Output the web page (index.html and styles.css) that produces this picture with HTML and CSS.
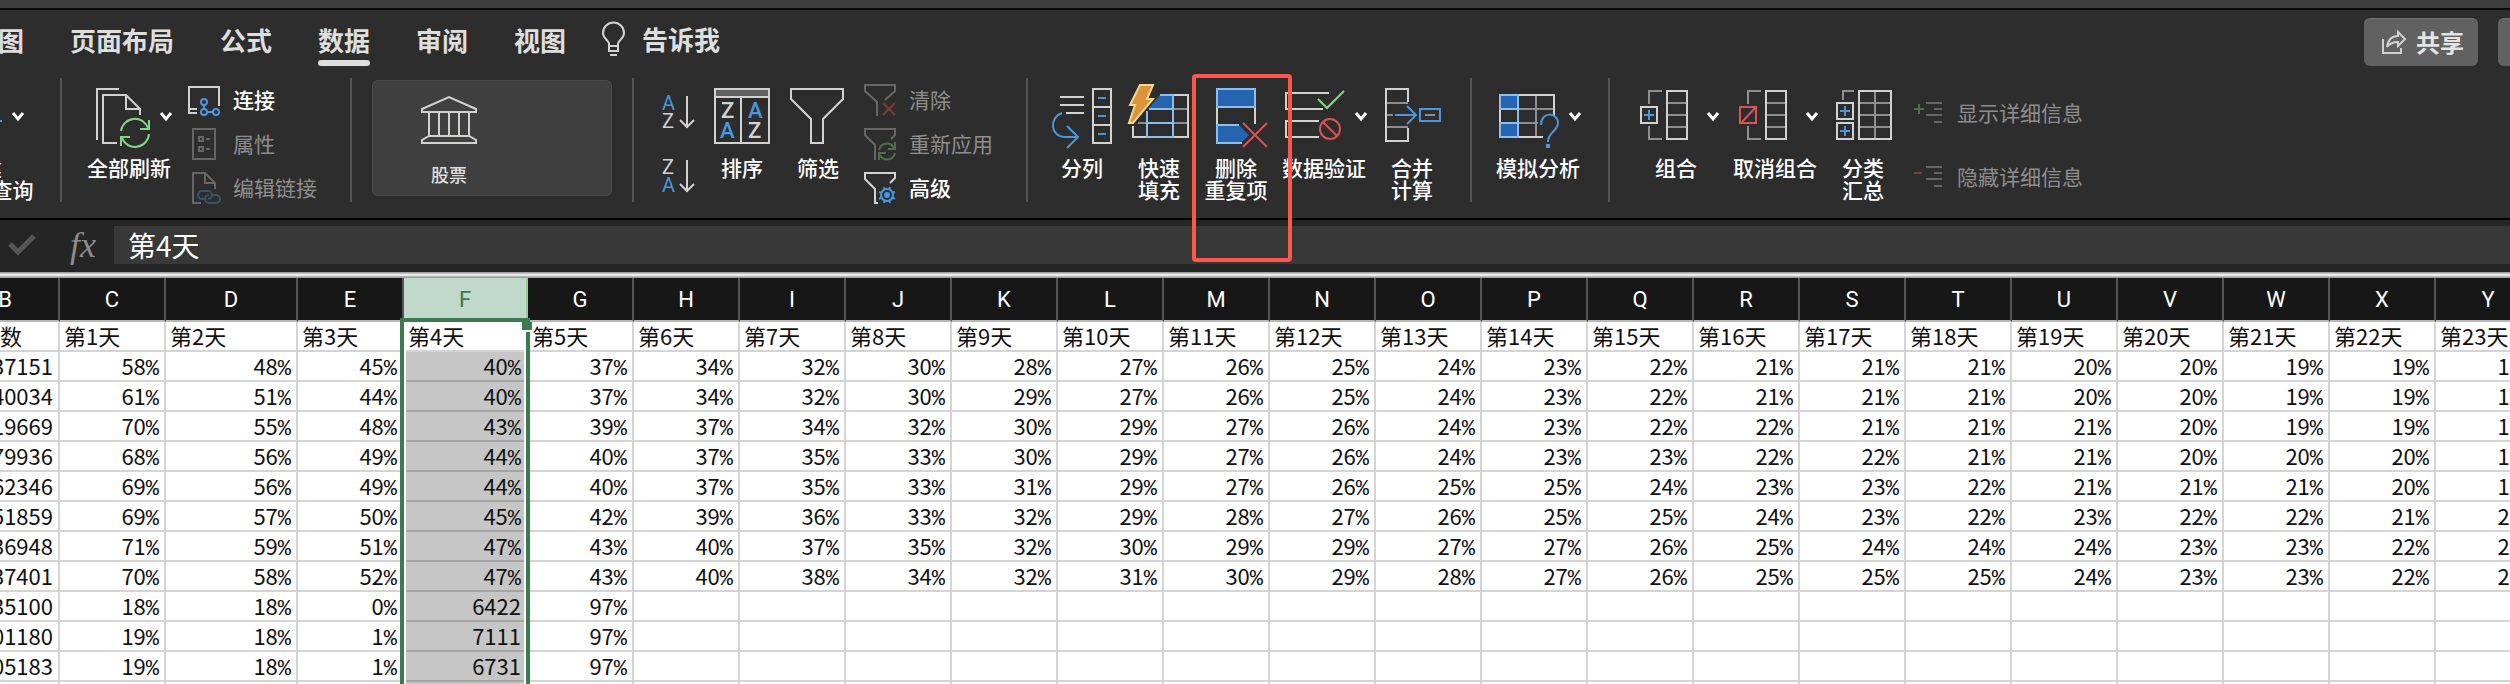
FILE: index.html
```html
<!DOCTYPE html>
<html lang="zh-CN">
<head>
<meta charset="utf-8">
<title>数据</title>
<link rel="stylesheet" href="styles.css">
</head>
<body>
<div class="titlebar"></div>
<header class="ribbon">
  <div class="topline">
    <nav class="tabs">
      <a class="tab" href="#draw">图</a>
      <a class="tab" href="#layout">页面布局</a>
      <a class="tab" href="#formula">公式</a>
      <a class="tab tab-active" href="#data" aria-current="page">数据</a>
      <a class="tab" href="#review">审阅</a>
      <a class="tab" href="#view">视图</a>
    </nav>
    <button class="tellme" type="button">
      <svg class="ln" width="24" height="34" viewBox="0 0 24 34"><path d="M7 25V22C7 18 1 17 1 11A10.500 10.500 0 0 1 22 11C22 17 16 18 16 22V25" /><path d="M6 24H17M6 29H17M7 24V29M16 24V29M8 33H15"/></svg>
      告诉我
    </button>
    <div class="actions">
      <button class="share" type="button">
        <svg class="ln" width="24" height="24" viewBox="0 0 24 24"><path d="M1 9V23H19V18"/><path d="M5 17C6 10 10 6 16 6V2L23 9L16 16V12C11 12 8 13 5 17Z"/></svg>
        共享
      </button>
      <button class="share share-cut" type="button" aria-label="批注"></button>
    </div>
  </div>

  <div class="tools">
    <div class="group group-query">
      <button class="split" type="button">
        <span class="pic">
          <svg class="ln" width="60" height="64" viewBox="0 0 60 64"><path d="M8 8H52V30M8 8V56H30M8 24H52M8 40H34M22 8V56"/><path class="bl" d="M36 37H60M36 37V58H52"/></svg>
          <svg class="chev" width="12" height="9" viewBox="0 0 12 9"><path d="M1 1L6 7L11 1"/></svg>
        </span>
        <span class="cap">新建<br>数据库查询</span>
      </button>
    </div>
    <div class="rule"></div>

    <div class="group group-refresh">
      <button class="split" type="button">
        <span class="pic">
          <svg class="ln" width="60" height="64" viewBox="0 0 60 64"><path d="M7 56V5H29M27 59H13V11H36L50 25V31M36 11V25H50"/><path class="gn" d="M31 47A14 14 0 0 1 58 44M59 36V45H50M59 50A14 14 0 0 1 32 54M31 62V53H40"/></svg>
          <svg class="chev" width="12" height="9" viewBox="0 0 12 9"><path d="M1 1L6 7L11 1"/></svg>
        </span>
        <span class="cap">全部刷新</span>
      </button>
      <div class="stack">
        <button class="mini" type="button">
          <svg class="ln" width="32" height="32" viewBox="0 0 32 32"><path d="M9 29H1V3H31V22M1 25H9"/><g class="bl"><circle cx="16" cy="18" r="3"/><circle cx="16" cy="28" r="3"/><circle cx="28" cy="28" r="3"/><path d="M16 21V25M19 28H25"/></g></svg>
          连接
        </button>
        <button class="mini" type="button" disabled>
          <svg class="dm" width="32" height="32" viewBox="0 0 32 32"><path d="M5 1H27V31H5ZM11 9H15V13H11ZM11 19H15V23H11ZM18 11H22M18 21H22"/></svg>
          属性
        </button>
        <button class="mini" type="button" disabled>
          <svg class="dm" width="32" height="32" viewBox="0 0 32 32"><path d="M13 31H5V1H17L27 11V17M17 1V11H27"/><path class="dbl" d="M16 27H14A4 4 0 0 1 14 19H20A4 4 0 0 1 20 27M25 23H28A4 4 0 0 1 28 31H21A4 4 0 0 1 21 23"/></svg>
          编辑链接
        </button>
      </div>
    </div>
    <div class="rule"></div>

    <div class="group group-types">
      <div class="gallery">
        <button class="type" type="button">
          <svg class="ln" width="56" height="48" viewBox="0 0 56 48"><path d="M1 13L28 1L55 13V16H1ZM8 16V40M18 16V40M28 16V40M38 16V40M48 16V40M8 40H48L55 44V47H1V44Z"/></svg>
          股票
        </button>
      </div>
    </div>
    <div class="rule"></div>

    <div class="group group-sort">
      <div class="orders">
        <button class="order" type="button" aria-label="升序">
          <svg class="ln" width="36" height="32" viewBox="0 0 36 32"><text class="tb" x="0" y="14">A</text><text x="0" y="32">Z</text><path d="M25 0V31M18 24L25 31L32 24"/></svg>
        </button>
        <button class="order" type="button" aria-label="降序">
          <svg class="ln" width="36" height="32" viewBox="0 0 36 32"><text x="0" y="14">Z</text><text class="tb" x="0" y="32">A</text><path d="M25 0V31M18 24L25 31L32 24"/></svg>
        </button>
      </div>
      <button class="tool" type="button">
        <svg class="ln" width="64" height="64" viewBox="0 0 64 64"><path class="band" d="M5 5H59V13H5Z"/><path d="M5 5H59V59H5ZM31 13V59"/><g class="big"><text x="11" y="34">Z</text><text class="tb" x="10" y="54">A</text><text class="tb" x="38" y="34">A</text><text x="38" y="54">Z</text></g></svg>
        <span class="cap">排序</span>
      </button>
      <button class="tool" type="button">
        <svg class="ln" width="64" height="64" viewBox="0 0 64 64"><path d="M5 5H57V15L37 35V59H25V35L5 15Z"/></svg>
        <span class="cap">筛选</span>
      </button>
      <div class="stack">
        <button class="mini" type="button" disabled>
          <svg class="dm" width="32" height="32" viewBox="0 0 32 32"><path d="M13 32V18L1 7V1H31V7L21 16"/><path class="drd" d="M19 19L31 31M31 19L19 31"/></svg>
          清除
        </button>
        <button class="mini" type="button" disabled>
          <svg class="dm" width="32" height="32" viewBox="0 0 32 32"><path d="M11 32V17L1 7V1H31V7L27 11"/><path class="dgn" d="M15 22A8 8 0 0 1 30 20M31 14V21H24M31 25A8 8 0 0 1 16 27M15 32V25H22"/></svg>
          重新应用
        </button>
        <button class="mini" type="button">
          <svg class="ln" width="32" height="32" viewBox="0 0 32 32"><path d="M14 31H11V17L1 7V1H31V6L26 11"/><g class="bl"><circle class="dot" cx="23" cy="23" r="2"/><path d="M21 18L20 15M25 18L26 15M28 21L31 20M28 25L31 27M25 28L26 31M21 28L20 31M18 25L15 27M18 21L15 20"/><circle cx="23" cy="23" r="6"/></g></svg>
          高级
        </button>
      </div>
    </div>
    <div class="rule"></div>

    <div class="group group-data">
      <button class="tool" type="button">
        <svg class="ln" width="64" height="64" viewBox="0 0 64 64"><path d="M10 13H34M10 21H34M16 29H34M43 5H61V59H43ZM43 23H61M43 41H61"/><path class="bl" d="M48 14H56M48 32H56M48 50H56M12 29C-1 33 0 53 15 53H27M17 42L28 53L17 64"/></svg>
        <span class="cap">分列</span>
      </button>
      <button class="tool" type="button">
        <svg class="ln" width="64" height="64" viewBox="0 0 64 64"><path class="gy" d="M47 25H61M11 39H61"/><path d="M46 11H61V53H6V42"/><path class="fill" d="M33 11H46V25H21Z"/><path class="lb" d="M33 11H46V53H20V27M22 25H46M20 39H46"/><path class="bolt" d="M13 1H26L20 15H26L6 39H2L8 21H3Z"/></svg>
        <span class="cap">快速<br>填充</span>
      </button>
      <button class="tool tool-marked" type="button">
        <svg class="ln" width="64" height="64" viewBox="0 0 64 64"><path d="M13 23V41M51 23V40"/><path class="fill lb" d="M13 5H51V23H13Z"/><path class="fill" d="M13 41H35L45 51L37 59H13Z"/><path class="lb" d="M35 41H13V59H38"/><path class="rd" d="M39 39L63 63M63 39L39 63"/></svg>
        <span class="cap">删除<br>重复项</span>
      </button>
      <button class="split" type="button">
        <span class="pic">
          <svg class="ln" width="60" height="64" viewBox="0 0 60 64"><path d="M44 9H1V25H38M34 37H1V53H34"/><path class="gn" d="M33 15L42 24L59 7"/><g class="rd"><circle cx="45" cy="45" r="10"/><path d="M38 38L52 52"/></g></svg>
          <svg class="chev" width="12" height="9" viewBox="0 0 12 9"><path d="M1 1L6 7L11 1"/></svg>
        </span>
        <span class="cap">数据验证</span>
      </button>
      <button class="tool" type="button">
        <svg class="ln" width="64" height="64" viewBox="0 0 64 64"><path class="gy" d="M6 19H28M6 43H28M6 31H13M45 31H55"/><path d="M28 18V5H6V57H28V44"/><path class="bl" d="M15 31H36M27 22L36 31L27 40M40 25H60V37H40Z"/></svg>
        <span class="cap">合并<br>计算</span>
      </button>
    </div>
    <div class="rule"></div>

    <div class="group group-what">
      <button class="split" type="button">
        <span class="pic">
          <svg class="ln" width="60" height="64" viewBox="0 0 60 64"><path class="gy" d="M19 25H55M19 39H39M37 11V53"/><path d="M19 11H55V32M1 25V39M19 53H44"/><path class="fill lb" d="M1 11H19V25H1ZM1 39H19V53H1Z"/><path class="lb" d="M19 25V39"/><path class="bl" d="M42 41C42 27 59 28 59 39C59 47 49 48 49 58"/><path class="bl thick" d="M47 62H51"/></svg>
          <svg class="chev" width="12" height="9" viewBox="0 0 12 9"><path d="M1 1L6 7L11 1"/></svg>
        </span>
        <span class="cap">模拟分析</span>
      </button>
    </div>
    <div class="rule"></div>

    <div class="group group-outline">
      <button class="split" type="button">
        <span class="pic">
          <svg class="ln" width="60" height="64" viewBox="0 0 60 64"><path class="gy" d="M25 7H12V20M12 42V55H25M30 19H50M30 31H50M30 43H50"/><path d="M4 23H20V39H4ZM30 7H50V55H30Z"/><path class="bl" d="M7 31H17M12 26V36"/></svg>
          <svg class="chev" width="12" height="9" viewBox="0 0 12 9"><path d="M1 1L6 7L11 1"/></svg>
        </span>
        <span class="cap">组合</span>
      </button>
      <button class="split" type="button">
        <span class="pic">
          <svg class="ln" width="60" height="64" viewBox="0 0 60 64"><path class="gy" d="M25 7H12V20M12 42V55H25M30 19H50M30 31H50M30 43H50"/><path d="M30 7H50V55H30Z"/><path class="rd" d="M4 23H20V39H4ZM6 38L19 24"/></svg>
          <svg class="chev" width="12" height="9" viewBox="0 0 12 9"><path d="M1 1L6 7L11 1"/></svg>
        </span>
        <span class="cap">取消组合</span>
      </button>
      <button class="tool" type="button">
        <svg class="ln" width="64" height="64" viewBox="0 0 64 64"><path class="gy" d="M23 7H12V16M44 7V55M28 19H60M28 31H60M28 43H60"/><path d="M6 19H22V35H6ZM6 39H22V55H6ZM28 7H60V55H28Z"/><path class="bl" d="M9 27H19M14 22V32M9 47H19M14 42V52"/></svg>
        <span class="cap">分类<br>汇总</span>
      </button>
      <div class="stack stack-wide">
        <button class="mini" type="button" disabled>
          <svg class="dm" width="32" height="24" viewBox="0 0 32 24"><path d="M14 2H30M22 8H30M14 14H30M22 21H30"/><path class="dgn" d="M2 8H12M7 3V13"/></svg>
          显示详细信息
        </button>
        <button class="mini" type="button" disabled>
          <svg class="dm" width="32" height="24" viewBox="0 0 32 24"><path d="M14 2H30M22 8H30M14 14H30M22 21H30"/><path class="drd" d="M2 8H10"/></svg>
          隐藏详细信息
        </button>
      </div>
    </div>
  </div>
</header>

<div class="formula">
  <button class="accept" type="button" aria-label="输入">
    <svg width="28" height="22" viewBox="0 0 28 22"><path d="M2 10L10 18L26 2"/></svg>
  </button>
  <label class="fx" for="cell">fx</label>
  <input class="cell-input" id="cell" type="text" value="第4天">
</div>
<div class="splitter"></div>

<main class="sheet">
  <table class="grid" id="grid">
    <colgroup><col class="c-b"><col><col class="c-d"><col><col class="c-f"><col span="19"></colgroup>
  </table>
</main>
<script src="sheet.js"></script>
</body>
</html>
```

FILE: styles.css
```css
*, *::before, *::after { box-sizing: border-box; }

body {
  margin: 0;
  height: 100vh;
  overflow: hidden;
  display: flex;
  flex-direction: column;
  background: #fff;
  font-family: "Noto Sans CJK SC", sans-serif;
}

button {
  border: 0;
  padding: 0;
  background: none;
  font: inherit;
  color: inherit;
}

svg { display: block; flex: none; overflow: visible; }

/* Ribbon */
.titlebar { height: 10px; flex: none; background: #3c3c3c; border-bottom: 2px solid #0a0a0a; }

.ribbon {
  flex: none;
  background: #2d2d2d;
  border-bottom: 2px solid #000;
  color: #fff;
}

.topline { display: flex; align-items: flex-start; height: 68px; }

.tabs { display: flex; gap: 46px; margin-left: -2px; padding-top: 15px; }

.tab {
  color: #dedede;
  font-size: 26px;
  font-weight: 700;
  line-height: 30px;
  text-decoration: none;
  white-space: nowrap;
}

.tab-active::after {
  content: "";
  display: block;
  height: 6px;
  margin-top: 5px;
  border-radius: 3px;
  background: #dedede;
}

.tellme {
  display: flex;
  align-items: center;
  gap: 16px;
  margin-left: 36px;
  padding-top: 12px;
  color: #dedede;
  font-size: 26px;
  font-weight: 700;
  line-height: 34px;
}

.actions { display: flex; gap: 20px; margin-left: auto; padding-top: 8px; }

.share {
  display: flex;
  align-items: center;
  gap: 10px;
  height: 48px;
  padding: 0 14px 2px 18px;
  border-radius: 6px;
  border-top: 1px solid #747474;
  background: #616161;
  color: #e4e4e4;
  font-size: 24px;
  font-weight: 700;
}

.share-cut { width: 12px; padding: 0; border-radius: 6px 0 0 6px; }

.tools { display: flex; height: 140px; padding-bottom: 16px; white-space: nowrap; }

.rule { flex: none; width: 2px; background: #545454; }

.group { flex: none; display: flex; align-items: flex-start; gap: 13px; padding-top: 6px; }
.group-query { margin-left: -62px; padding-right: 36px; }
.group-refresh { gap: 16px; padding-left: 24px; padding-right: 33px; }
.group-types { padding: 2px 20px 0; }
.group-sort { gap: 12px; padding-left: 28px; padding-right: 33px; }
.group-sort .stack { padding-left: 2px; }
.group-data { padding-left: 22px; padding-right: 26px; }
.group-what { padding-left: 23px; padding-right: 27px; }
.group-outline { padding-left: 23px; }

.tool, .split {
  display: flex;
  flex-direction: column;
  align-items: center;
  gap: 8px;
  font-size: 21px;
  font-weight: 500;
  line-height: 22px;
}
.tool { width: 64px; }
.split { width: 86px; }

.pic { display: flex; align-items: center; align-self: flex-end; gap: 10px; }
.cap { text-align: center; }

.tool-marked { position: relative; }
.tool-marked::after {
  content: "";
  position: absolute;
  z-index: 2;
  left: -12px;
  top: -10px;
  width: 100px;
  height: 188px;
  border: 4px solid #ff5650;
  border-radius: 4px;
}

.stack { display: flex; flex-direction: column; gap: 12px; }
.mini {
  display: flex;
  align-items: flex-start;
  gap: 13px;
  height: 32px;
  font-size: 21px;
  font-weight: 500;
  line-height: 30px;
}
.mini:disabled { color: #8d8d8d; font-weight: 400; }

.stack-wide { gap: 40px; padding: 17px 0 0 4px; }
.stack-wide .mini { height: 24px; line-height: 22px; }

.gallery {
  width: 240px;
  height: 116px;
  padding: 15px 39px;
  border: 1px solid #4c4c4c;
  border-radius: 6px;
  background: #404040;
}
.type {
  display: flex;
  flex-direction: column;
  align-items: center;
  gap: 18px;
  width: 74px;
  color: #dedede;
  font-size: 18px;
  font-weight: 500;
  line-height: 24px;
}

.orders { display: flex; flex-direction: column; gap: 32px; padding-top: 12px; }

/* Icon strokes */
.ln, .dm { fill: none; stroke: #d2d2d0; stroke-width: 2; }
.dm { stroke: #666; }
.bl { stroke: #4a97de; }
.lb { stroke: #8cbdec; }
.gn { stroke: #86d686; }
.rd { stroke: #d75550; }
.gy { stroke: #8f8f8f; }
.dbl { stroke: #38536b; }
.dgn { stroke: #4f6e4c; }
.drd { stroke: #7c3b38; }
.thick { stroke-width: 4; }
.fill { fill: #2464b0; }
.fill:not(.lb) { stroke: none; }
.band { fill: #616161; }
.bolt { fill: #dc943c; stroke: #f6d78e; }
.dot { fill: #4a97de; }
.chev { fill: none; stroke: #fff; stroke-width: 3; }
.ln text { fill: #d2d2d0; stroke: none; font-family: Roboto, sans-serif; font-size: 20px; }
.ln .big text { font-size: 22px; }
.ln text.tb { fill: #4a97de; }

/* Formula bar */
.formula {
  flex: none;
  display: flex;
  align-items: center;
  height: 52px;
  padding: 0 0 2px 8px;
  background: #252525;
}
.accept { width: 62px; }
.accept svg { fill: none; stroke: #565656; stroke-width: 5; }
.fx {
  width: 44px;
  color: #8c8c8c;
  font: italic 36px/38px "Liberation Serif", serif;
}
.cell-input {
  flex: 1;
  min-width: 0;
  height: 38px;
  border: 0;
  padding: 0 14px;
  background: #383838;
  color: #fff;
  font: 400 28px/38px "Noto Sans CJK SC", sans-serif;
}

.splitter {
  flex: none;
  height: 6px;
  background: linear-gradient(#8f8f93, #d8d8d8 35%, #fff 50%, #b4b4b6 75%, #98989c);
}

/* Worksheet */
.sheet { flex: 1; min-height: 0; overflow: hidden; }

.grid {
  width: 2590px;
  margin-left: -48px;
  table-layout: fixed;
  border-spacing: 0;
  color: #111;
  font-size: 22px;
  line-height: 26px;
}
.grid col { width: 106px; }
.grid .c-b { width: 108px; }
.grid .c-d { width: 132px; }
.grid .c-f { width: 124px; }

.grid thead th {
  position: relative;
  height: 44px;
  padding: 2px 0 0;
  border-right: 2px solid #555;
  border-bottom: 2px solid #b8b8b8;
  background: #171717;
  color: #fff;
  font-family: Roboto, sans-serif;
  font-weight: 400;
}
.grid thead .picked {
  border-right-color: #8fcf8f;
  background: #c0d9cb;
  color: #3c7a4f;
}

.grid td {
  height: 30px;
  padding: 0 5px 2px 4px;
  border-right: 2px solid #d4d4d4;
  border-bottom: 2px solid #d4d4d4;
  overflow: hidden;
  text-align: right;
  white-space: nowrap;
}
.grid .name { text-align: left; }
.grid .shade { background: #c6c6c6; border-bottom-color: #a4a4a4; }
.pct { font-family: "Liberation Mono", monospace; line-height: 0; }

.selection {
  position: absolute;
  z-index: 1;
  left: -4px;
  right: -4px;
  top: 40px;
  height: 100vh;
  border: 4px solid #3c7a4f;
  box-shadow: inset 0 0 0 2px #fff;
  pointer-events: none;
}
.selection::after {
  content: "";
  position: absolute;
  right: -6px;
  top: 0;
  width: 10px;
  height: 8px;
  background: #3c7a4f;
  box-shadow: 0 2px 0 #fff;
}
```

FILE: sheet.js
```js
const columns = "BCDEFGHIJKLMNOPQRSTUVWXY".split("");
const picked = columns.indexOf("F");

const rows = [
  [137151, 58, 48, 45, 40, 37, 34, 32, 30, 28, 27, 26, 25, 24, 23, 22, 21, 21, 21, 20, 20, 19, 19, 18],
  [140034, 61, 51, 44, 40, 37, 34, 32, 30, 29, 27, 26, 25, 24, 23, 22, 21, 21, 21, 20, 20, 19, 19, 18],
  [119669, 70, 55, 48, 43, 39, 37, 34, 32, 30, 29, 27, 26, 24, 23, 22, 22, 21, 21, 21, 20, 19, 19, 18],
  [179936, 68, 56, 49, 44, 40, 37, 35, 33, 30, 29, 27, 26, 24, 23, 23, 22, 22, 21, 21, 20, 20, 20, 19],
  [162346, 69, 56, 49, 44, 40, 37, 35, 33, 31, 29, 27, 26, 25, 25, 24, 23, 23, 22, 21, 21, 21, 20, 19],
  [151859, 69, 57, 50, 45, 42, 39, 36, 33, 32, 29, 28, 27, 26, 25, 25, 24, 23, 22, 23, 22, 22, 21, 20],
  [136948, 71, 59, 51, 47, 43, 40, 37, 35, 32, 30, 29, 29, 27, 27, 26, 25, 24, 24, 24, 23, 23, 22, 21],
  [137401, 70, 58, 52, 47, 43, 40, 38, 34, 32, 31, 30, 29, 28, 27, 26, 25, 25, 25, 24, 23, 23, 22, 21],
  [135100, 18, 18, 0, 6422, 97],
  [101180, 19, 18, 1, 7111, 97],
  [105183, 19, 18, 1, 6731, 97],
  []
];

const table = document.getElementById("grid");

const head = table.createTHead().insertRow();
columns.forEach((letter, i) => {
  const th = document.createElement("th");
  th.scope = "col";
  th.textContent = letter;
  if (i === picked) {
    th.className = "picked";
    const frame = document.createElement("div");
    frame.className = "selection";
    th.append(frame);
  }
  head.append(th);
});

const body = table.createTBody();
const names = body.insertRow();
columns.forEach((_, i) => {
  const cell = names.insertCell();
  cell.className = "name";
  cell.textContent = i === 0 ? "总人数" : `第${i}天`;
});

rows.forEach((values) => {
  const row = body.insertRow();
  columns.forEach((_, i) => {
    const cell = row.insertCell();
    if (i === picked) cell.className = "shade";
    const value = values[i];
    if (value === undefined) return;
    cell.append(String(value));
    if (value < 100) {
      const sign = document.createElement("span");
      sign.className = "pct";
      sign.textContent = "%";
      cell.append(sign);
    }
  });
});
```
